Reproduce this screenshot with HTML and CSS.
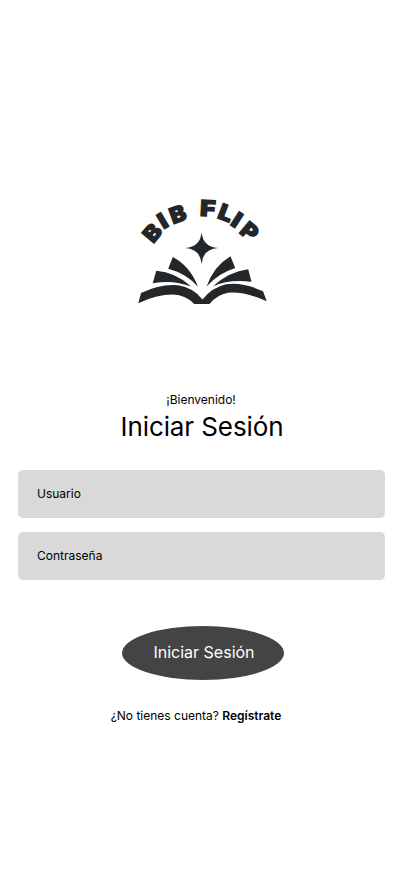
FILE: index.html
```html
<!DOCTYPE html>
<html lang="es">
<head>
    <meta charset="UTF-8">
    <meta name="viewport" content="width=device-width, initial-scale=1.0">
    <title>Bib Flip - Iniciar Sesión</title>
    <link rel="stylesheet" href="styles.css">
</head>
<body>
    <main class="container">
        <svg class="logo" viewBox="0 0 145 120" role="img" aria-label="Bib Flip">
            <!-- arched name -->
            <g class="logo-name">
                <text transform="translate(23.2 54) rotate(-50) scale(1.08 1)">B</text>
                <text transform="translate(33.6 39.6) rotate(-31) scale(1.15 1)">I</text>
                <text transform="translate(43 34.2) rotate(-20) scale(1.08 1)">B</text>
                <text transform="translate(69.8 25.8) rotate(3) scale(1.2 1)">F</text>
                <text transform="translate(86.6 27.7) rotate(21) scale(1.12 1)">L</text>
                <text transform="translate(99.6 34.4) rotate(33) scale(1.15 1)">I</text>
                <text transform="translate(108.6 42.5) rotate(40) scale(1.08 1)">P</text>
            </g>
            <!-- star -->
            <path d="M71.6 42 Q72.7 56.8 88 58 Q72.7 59.2 71.6 74 Q70.5 59.2 55.3 58 Q70.5 56.8 71.6 42Z"/>
            <!-- open book -->
            <path d="M42.8 67 Q60 76 68 96.7 Q56 83.5 38.2 78.8Z"/>
            <path d="M26.3 80.8 Q45 82 61.3 96.6 Q44 89.5 22.7 93.2Z"/>
            <path d="M100.5 66.3 Q84 76 76.5 96.5 Q88 83.5 105.2 78Z"/>
            <path d="M118.2 79.2 Q99 81.5 83 96.3 Q99 89 121.5 91.8Z"/>
            <path d="M11 103 Q31 93.5 48 95.3 Q63 97.5 72.5 109.5 Q82 97.5 96 94.3 Q113 92 133 101.3 L136.8 111.3 Q115 101.5 98 102.7 Q87 104.5 79.5 114 H64.3 Q56 105 43 104.5 Q26 104.5 8.3 113.3Z"/>
        </svg>

        <p class="welcome">¡Bienvenido!</p>
        <h1>Iniciar Sesión</h1>

        <form id="loginForm">
            <input type="text" name="usuario" placeholder="Usuario" aria-label="Usuario">
            <input type="password" name="contrasena" placeholder="Contraseña" aria-label="Contraseña">
            <button type="submit" class="btn">Iniciar Sesión</button>
        </form>

        <p class="register">¿No tienes cuenta? <a href="#">Regístrate</a></p>
    </main>
</body>
</html>
```
FILE: styles.css
```css
body {
    margin: 0;
    font-family: Inter, sans-serif;
    background: #fff;
    color: #000;
}
.container {
    display: flex;
    flex-direction: column;
    align-items: center;
    box-sizing: border-box;
    min-height: 100vh;
    padding: 190px 17px 0 18px;
}
.logo {
    width: 145px;
    height: 120px;
    margin-left: 2px;
    fill: #23272a;
}
.logo-name {
    font-size: 22px;
    font-weight: 900;
    stroke: #23272a;
    stroke-width: 1.2px;
}
.welcome {
    margin: 82px 1px 0 0;
    font-size: 12px;
    line-height: 15px;
}
h1 {
    margin: 4px 0 0 1px;
    font-size: 26px;
    font-weight: 400;
    letter-spacing: -0.1px;
    line-height: 32px;
}
form {
    display: flex;
    flex-direction: column;
    align-items: center;
    gap: 14px;
    width: 100%;
    margin-top: 27px;
}
input {
    box-sizing: border-box;
    width: 100%;
    height: 48px;
    padding: 0 19px 2px;
    border: none;
    border-radius: 5px;
    background: #d9d9d9;
    font-family: inherit;
    font-size: 12px;
}
input::placeholder {
    color: #000;
    opacity: 1;
}
.btn {
    width: 162px;
    height: 54px;
    margin: 32px 0 0 3px;
    padding: 0 0 2px 2px;
    border: none;
    border-radius: 50%;
    background: #444;
    color: #fff;
    font-family: inherit;
    font-size: 16px;
    cursor: pointer;
}
.register {
    margin: 28px 11px 0 0;
    font-size: 12px;
    line-height: 15px;
}
.register a {
    color: #000;
    font-weight: 600;
    text-decoration: none;
}
```
